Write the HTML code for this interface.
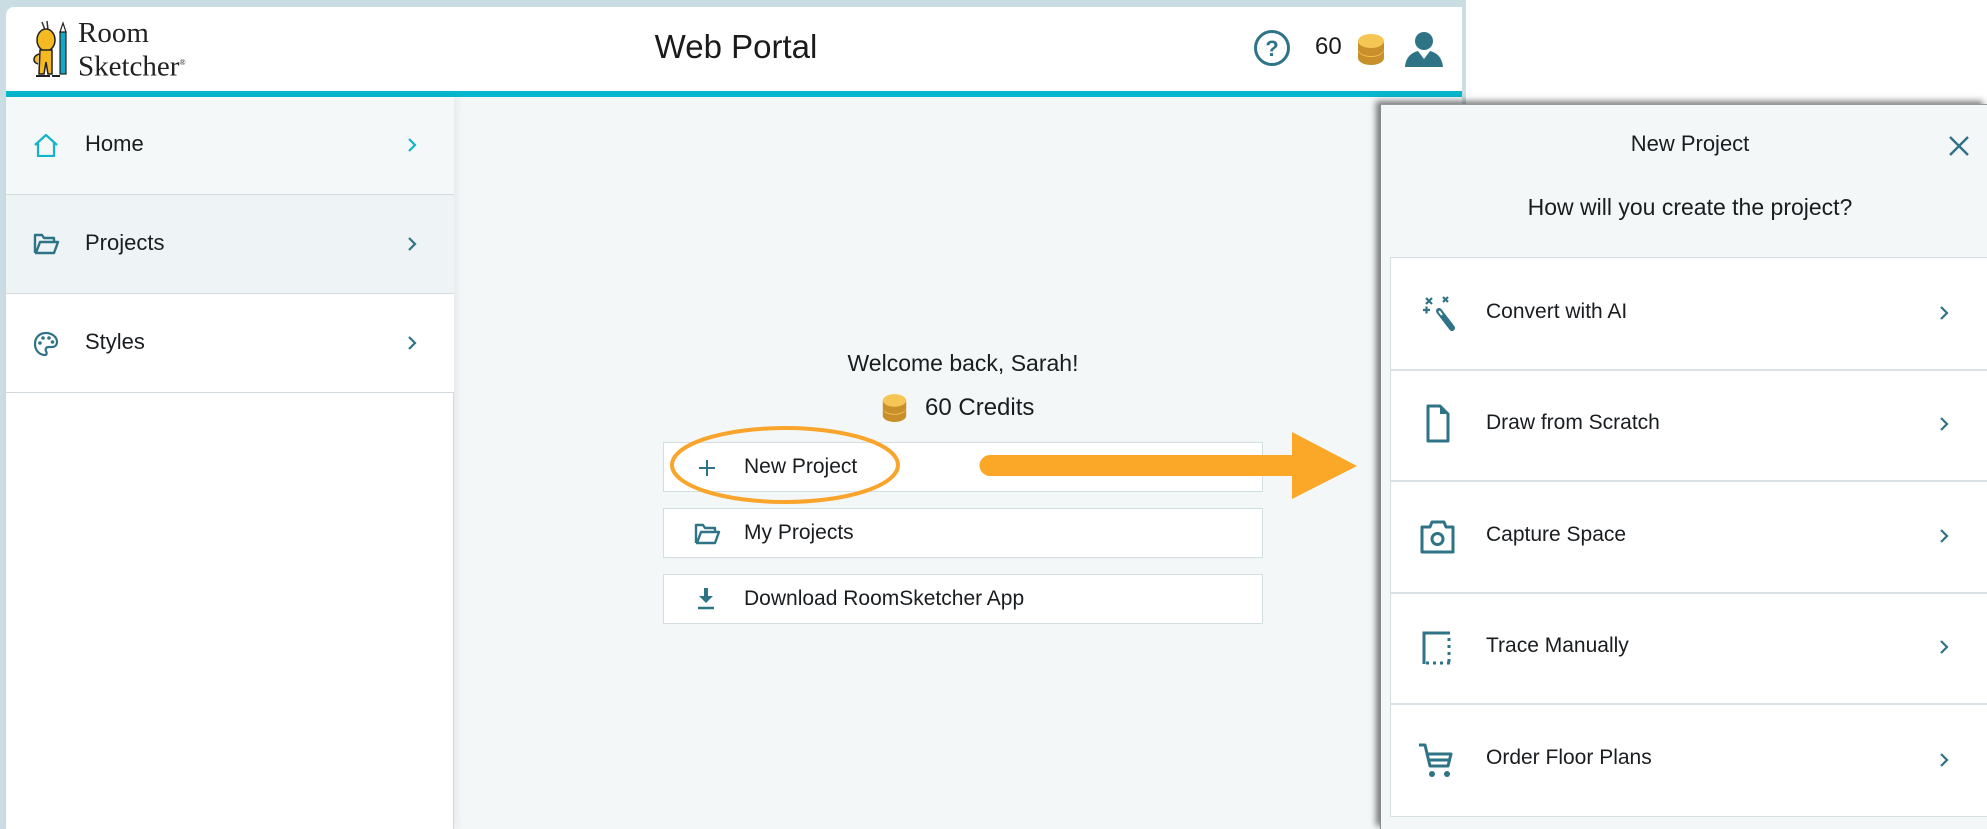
<!DOCTYPE html>
<html><head><meta charset="utf-8"><style>
*{margin:0;padding:0;box-sizing:border-box}
html,body{width:1987px;height:829px;overflow:hidden}
body{position:relative;background:#fff;font-family:"Liberation Sans",sans-serif;color:#1a1d20}
.a{position:absolute}
.t{font-size:22px;white-space:nowrap}
</style></head><body>
<div class="a" style="left:0;top:0;width:1466px;height:829px;background:#c9dde2"></div>
<div class="a" style="left:6px;top:7px;width:1456px;height:84px;background:#fff;border-top-left-radius:8px"></div>
<div class="a" style="left:6px;top:91px;width:1456px;height:6px;background:#07b7cd"></div>
<div class="a" style="left:6px;top:97px;width:1456px;height:732px;background:#f3f7f8"></div>
<div class="a" style="left:6px;top:97px;width:448px;height:732px;background:#fff;border-right:1px solid #d2dadd;box-shadow:3px 0 8px rgba(0,0,0,0.06)"></div>
<div class="a" style="left:6px;top:97px;width:448px;height:98px;background:#f5f8f9;border-bottom:1px solid #d2dadd"></div>
<div class="a" style="left:6px;top:195px;width:448px;height:99px;background:#eef3f5;border-bottom:1px solid #d2dadd"></div>
<div class="a" style="left:6px;top:294px;width:448px;height:99px;background:#fff;border-bottom:1px solid #d2dadd"></div>

<svg class="a" style="left:30px;top:18px" width="40" height="62" viewBox="0 0 40 62">
<path d="M12 4 L15 12 M17 3 L18 12" stroke="#333" stroke-width="1.5" fill="none"/>
<ellipse cx="16" cy="22" rx="9" ry="11" fill="#f5b921" stroke="#222" stroke-width="1.5"/>
<path d="M10 32 L22 32 L22 56 L18 56 L16 44 L14 56 L9 56 Z" fill="#f5b921" stroke="#222" stroke-width="1.5"/>
<path d="M9 36 C3 38 2 44 8 46" stroke="#222" stroke-width="1.5" fill="#f5b921"/>
<rect x="30" y="14" width="6" height="42" fill="#16a9c7" stroke="#222" stroke-width="1.2"/>
<path d="M30 14 L33 5 L36 14Z" fill="#fff" stroke="#222" stroke-width="1.2"/>
<path d="M6 58 L20 58 M22 58 L30 58" stroke="#222" stroke-width="2"/>
</svg>
<div class="a" style="left:78px;top:18px;font-family:'Liberation Serif',serif;font-size:29px;line-height:30px;color:#222">Room<br>Sketcher<sup style="font-size:8px">®</sup></div>

<div class="a" style="left:0;width:1472px;top:28px;text-align:center;font-size:33px;color:#1b1b1b">Web Portal</div>

<svg class="a" style="left:1253px;top:29px" width="38" height="38" viewBox="0 0 38 38"><circle cx="19" cy="19" r="16.5" fill="none" stroke="#2f7386" stroke-width="3"/><text x="19" y="27" text-anchor="middle" font-family="Liberation Sans" font-size="22" font-weight="bold" fill="#2f7386">?</text></svg>
<div class="a" style="left:1315px;top:33px;font-size:24px;color:#1b1b1b">60</div>
<svg class="a" style="left:1356px;top:33px" width="30" height="34" viewBox="0 0 30 34"><ellipse cx="15" cy="25" rx="13" ry="7" fill="#c98f2a"/><rect x="2" y="17" width="26" height="8" fill="#c98f2a"/><ellipse cx="15" cy="17" rx="13" ry="7" fill="#f2c14f"/><ellipse cx="15" cy="16" rx="13" ry="7" fill="#c98f2a"/><rect x="2" y="8" width="26" height="8" fill="#c98f2a"/><ellipse cx="15" cy="8" rx="13" ry="7" fill="#f5c653"/></svg>
<svg class="a" style="left:1404px;top:31px" width="40" height="36" viewBox="0 0 40 36"><circle cx="20" cy="10" r="9" fill="#2f7386"/><path d="M1 36 C2 24 10 21 14 20 L20 28 L26 20 C30 21 38 24 39 36Z" fill="#2f7386"/></svg>

<svg class="a" style="left:33px;top:133px" width="26" height="24" viewBox="0 0 26 24"><path d="M2 12 L13 2 L24 12 M5 10 V23 H21 V10" fill="none" stroke="#12b4cb" stroke-width="2.2" stroke-linejoin="round"/></svg>
<div class="a t" style="left:85px;top:131px">Home</div>
<svg class="a" style="left:406px;top:136px" width="12" height="18" viewBox="0 0 12 18"><path d="M3 3 L9 9 L3 15" fill="none" stroke="#12b4cb" stroke-width="2.2"/></svg>

<svg class="a" style="left:33px;top:233px" width="27" height="22" viewBox="0 0 27 22"><path d="M2 20 V2 H9 L11 5 H21 V9 M2 20 H21 L25 9 H7 L3 20" fill="none" stroke="#2f7386" stroke-width="2.4" stroke-linejoin="round"/></svg>
<div class="a t" style="left:85px;top:230px">Projects</div>
<svg class="a" style="left:406px;top:235px" width="12" height="18" viewBox="0 0 12 18"><path d="M3 3 L9 9 L3 15" fill="none" stroke="#2f7386" stroke-width="2.2"/></svg>

<svg class="a" style="left:33px;top:331px" width="26" height="26" viewBox="0 0 26 26"><path d="M13 2 C6 2 2 7 2 13 C2 20 7 24 12 24 C14 24 14 22 13 20 C12 18 13 16 16 16 H19 C22 16 24 14 24 11 C24 6 19 2 13 2Z" fill="none" stroke="#2f7386" stroke-width="2.2"/><circle cx="7" cy="12" r="1.8" fill="#2f7386"/><circle cx="10" cy="7" r="1.8" fill="#2f7386"/><circle cx="16" cy="7" r="1.8" fill="#2f7386"/><circle cx="19.5" cy="11" r="1.8" fill="#2f7386"/></svg>
<div class="a t" style="left:85px;top:329px">Styles</div>
<svg class="a" style="left:406px;top:334px" width="12" height="18" viewBox="0 0 12 18"><path d="M3 3 L9 9 L3 15" fill="none" stroke="#2f7386" stroke-width="2.2"/></svg>

<div class="a" style="left:663px;width:600px;top:350px;text-align:center;font-size:23px">Welcome back, Sarah!</div>
<svg class="a" style="left:881px;top:393px" width="27" height="31" viewBox="0 0 30 34"><ellipse cx="15" cy="25" rx="13" ry="7" fill="#c98f2a"/><rect x="2" y="17" width="26" height="8" fill="#c98f2a"/><ellipse cx="15" cy="17" rx="13" ry="7" fill="#f2c14f"/><ellipse cx="15" cy="16" rx="13" ry="7" fill="#c98f2a"/><rect x="2" y="8" width="26" height="8" fill="#c98f2a"/><ellipse cx="15" cy="8" rx="13" ry="7" fill="#f5c653"/></svg>
<div class="a" style="left:925px;top:394px;font-size:24px">60 Credits</div>

<div class="a" style="left:663px;top:442px;width:600px;height:50px;background:#fff;border:1.5px solid #d4dde0"></div>
<div class="a" style="left:663px;top:508px;width:600px;height:50px;background:#fff;border:1.5px solid #d4dde0"></div>
<div class="a" style="left:663px;top:574px;width:600px;height:50px;background:#fff;border:1.5px solid #d4dde0"></div>
<svg class="a" style="left:697px;top:458px" width="20" height="20" viewBox="0 0 20 20"><path d="M10 2 V18 M2 10 H18" stroke="#2f7386" stroke-width="2"/></svg>
<div class="a t" style="left:744px;top:455px;font-size:21px">New Project</div>
<svg class="a" style="left:694px;top:523px" width="27" height="22" viewBox="0 0 27 22"><path d="M2 20 V2 H9 L11 5 H21 V9 M2 20 H21 L25 9 H7 L3 20" fill="none" stroke="#2f7386" stroke-width="2.4" stroke-linejoin="round"/></svg>
<div class="a t" style="left:744px;top:521px;font-size:21px">My Projects</div>
<svg class="a" style="left:695px;top:587px" width="22" height="24" viewBox="0 0 22 24"><path d="M11 1 V12" stroke="#2f7386" stroke-width="4"/><path d="M4 9 L11 16 L18 9Z" fill="#2f7386"/><path d="M3 21 H19" stroke="#2f7386" stroke-width="2.5"/></svg>
<div class="a t" style="left:744px;top:587px;font-size:21px">Download RoomSketcher App</div>

<svg class="a" style="left:660px;top:420px" width="710" height="90" viewBox="0 0 710 90"><ellipse cx="125" cy="45" rx="113" ry="37" fill="none" stroke="#f9a42b" stroke-width="4"/><path d="M330 35 H632 V12 L697 46 L632 79 V56 H330 A10.5 10.5 0 0 1 330 35Z" fill="#fba829"/></svg>

<div class="a" style="left:1380px;top:104px;width:607px;height:725px;background:#f3f7f8;border-left:1px solid #888;border-top:1px solid #999;box-shadow:-4px -3px 6px rgba(0,0,0,0.5)"></div>
<div class="a" style="left:1380px;width:620px;top:131px;text-align:center;font-size:22px">New Project</div>
<svg class="a" style="left:1948px;top:135px" width="22" height="22" viewBox="0 0 22 22"><path d="M2 2 L20 20 M20 2 L2 20" stroke="#2f7386" stroke-width="2.4"/></svg>
<div class="a" style="left:1380px;width:620px;top:194px;text-align:center;font-size:23px">How will you create the project?</div>
<div class="a" style="left:1390px;top:257px;width:597px;height:560px;background:#fff;border:1.5px solid #d4dde0;border-right:none"></div>
<div class="a" style="left:1390px;top:369px;width:597px;height:1.5px;background:#d9e1e4"></div>
<div class="a" style="left:1390px;top:480px;width:597px;height:1.5px;background:#d9e1e4"></div>
<div class="a" style="left:1390px;top:592px;width:597px;height:1.5px;background:#d9e1e4"></div>
<div class="a" style="left:1390px;top:703px;width:597px;height:1.5px;background:#d9e1e4"></div>

<svg class="a" style="left:1421px;top:295px" width="36" height="38" viewBox="0 0 36 38"><path d="M18 16 L31 33" stroke="#2f7386" stroke-width="6" stroke-linecap="round"/><path d="M18 16 L21 20" stroke="#fff" stroke-width="2"/><path d="M5 3 L11 9 M11 3 L5 9 M22 2 L27 7 M27 2 L22 7 M2 15 H9 M5.5 11.5 V18.5" stroke="#2f7386" stroke-width="2.2"/></svg>
<div class="a t" style="left:1486px;top:300px;font-size:21px">Convert with AI</div>
<svg class="a" style="left:1425px;top:404px" width="26" height="40" viewBox="0 0 26 40"><path d="M3 2 H15 L23 10 V37 H3Z" fill="none" stroke="#2f7386" stroke-width="3" stroke-linejoin="round"/><path d="M15 2 V10 H23Z" fill="#2f7386"/></svg>
<div class="a t" style="left:1486px;top:411px;font-size:21px">Draw from Scratch</div>
<svg class="a" style="left:1420px;top:519px" width="36" height="36" viewBox="0 0 36 36"><path d="M2 8 H10 L12 3 H24 L26 8 H33 V33 H2Z" fill="none" stroke="#2f7386" stroke-width="3" stroke-linejoin="round"/><circle cx="17.5" cy="20" r="5.5" fill="none" stroke="#2f7386" stroke-width="3"/></svg>
<div class="a t" style="left:1486px;top:523px;font-size:21px">Capture Space</div>
<svg class="a" style="left:1421px;top:630px" width="32" height="36" viewBox="0 0 32 36"><path d="M3 34 V3 H29" fill="none" stroke="#2f7386" stroke-width="3"/><path d="M28 8 V34 M5 33 H29" fill="none" stroke="#2f7386" stroke-width="3" stroke-dasharray="3 4"/></svg>
<div class="a t" style="left:1486px;top:634px;font-size:21px">Trace Manually</div>
<svg class="a" style="left:1417px;top:742px" width="38" height="38" viewBox="0 0 38 38"><path d="M2 3 H8 L13 24 H31 L34 12 H11 M11 18 H32" fill="none" stroke="#2f7386" stroke-width="3" stroke-linejoin="round"/><circle cx="15" cy="32" r="3" fill="#2f7386"/><circle cx="30" cy="32" r="3" fill="#2f7386"/></svg>
<div class="a t" style="left:1486px;top:746px;font-size:21px">Order Floor Plans</div>

<svg class="a" style="left:1938px;top:304px" width="12" height="18" viewBox="0 0 12 18"><path d="M3 3 L9 9 L3 15" fill="none" stroke="#2f7386" stroke-width="2.2"/></svg>
<svg class="a" style="left:1938px;top:415px" width="12" height="18" viewBox="0 0 12 18"><path d="M3 3 L9 9 L3 15" fill="none" stroke="#2f7386" stroke-width="2.2"/></svg>
<svg class="a" style="left:1938px;top:527px" width="12" height="18" viewBox="0 0 12 18"><path d="M3 3 L9 9 L3 15" fill="none" stroke="#2f7386" stroke-width="2.2"/></svg>
<svg class="a" style="left:1938px;top:638px" width="12" height="18" viewBox="0 0 12 18"><path d="M3 3 L9 9 L3 15" fill="none" stroke="#2f7386" stroke-width="2.2"/></svg>
<svg class="a" style="left:1938px;top:751px" width="12" height="18" viewBox="0 0 12 18"><path d="M3 3 L9 9 L3 15" fill="none" stroke="#2f7386" stroke-width="2.2"/></svg>
</body></html>
